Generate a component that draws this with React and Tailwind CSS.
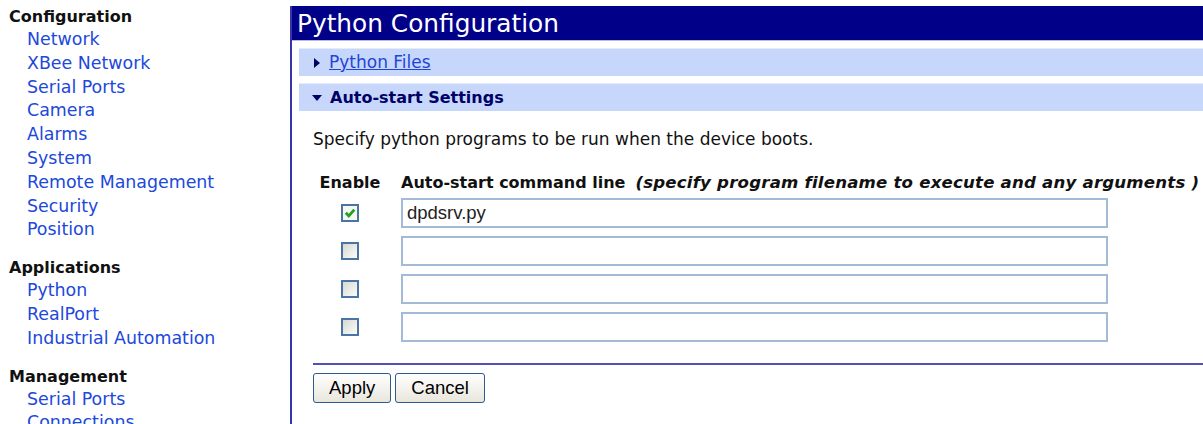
import React, { useState } from 'react'

const groups = [
  {
    title: 'Configuration',
    links: ['Network', 'XBee Network', 'Serial Ports', 'Camera', 'Alarms', 'System', 'Remote Management', 'Security', 'Position'],
  },
  { title: 'Applications', links: ['Python', 'RealPort', 'Industrial Automation'] },
  { title: 'Management', links: ['Serial Ports', 'Connections'] },
]

const initialRows = [
  { enabled: true, cmd: 'dpdsrv.py' },
  { enabled: false, cmd: '' },
  { enabled: false, cmd: '' },
  { enabled: false, cmd: '' },
]

function Sidebar() {
  return (
    <nav className="w-[290px] shrink-0 pt-[6px] pl-[9px] font-['DejaVu_Sans',sans-serif]">
      {groups.map((g, i) => (
        <div key={g.title} className={i > 0 ? 'mt-[15px]' : ''}>
          <div className="text-[16px] font-bold leading-[22px] text-[#111]">{g.title}</div>
          <ul>
            {g.links.map((l) => (
              <li key={l} className="pl-[18px] text-[17.4px] leading-[23.8px] text-[#2048dc]">
                <a href="#">{l}</a>
              </li>
            ))}
          </ul>
        </div>
      ))}
    </nav>
  )
}

function Checkbox({ checked, onChange }) {
  return (
    <button
      type="button"
      onClick={onChange}
      className={`flex h-[18px] w-[18px] items-center justify-center border-2 border-[#4a74a6] ${
        checked ? 'bg-[#f6f6f3]' : 'bg-gradient-to-br from-[#d9d9d3] to-[#fbfbf9]'
      }`}
    >
      {checked && (
        <svg viewBox="0 0 10 10" className="h-[12px] w-[12px]">
          <path d="M1.5 4.8 L4 7.4 L8.6 2.2" fill="none" stroke="#21a321" strokeWidth="2.4" />
        </svg>
      )}
    </button>
  )
}

function XpButton({ children }) {
  return (
    <button
      type="button"
      className="h-[30px] rounded-[3px] border border-[#2f5a8c] bg-gradient-to-b from-[#ffffff] to-[#e8e6dc] px-[15px] font-['Liberation_Sans',sans-serif] text-[18.5px] text-black"
    >
      {children}
    </button>
  )
}

function Arrow({ open }) {
  return open ? (
    <svg viewBox="0 0 10 6" className="mr-[6px] h-[6px] w-[10px]">
      <path d="M0 0 H10 L5 6 Z" fill="#000066" />
    </svg>
  ) : (
    <svg viewBox="0 0 6 10" className="mr-[9px] ml-[1px] h-[10px] w-[6px]">
      <path d="M0 0 L6 5 L0 10 Z" fill="#000066" />
    </svg>
  )
}

export default function App() {
  const [rows, setRows] = useState(initialRows)
  const [filesOpen, setFilesOpen] = useState(false)

  const toggle = (i) =>
    setRows(rows.map((r, j) => (j === i ? { ...r, enabled: !r.enabled } : r)))
  const setCmd = (i, v) => setRows(rows.map((r, j) => (j === i ? { ...r, cmd: v } : r)))

  return (
    <div className="flex h-[424px] w-[1203px] overflow-hidden bg-white">
      <Sidebar />

      {/* Main panel */}
      <main className="mt-[6px] flex-1 border-l-2 border-[#3535a8] font-['DejaVu_Sans',sans-serif]">
        <h1 className="h-[35px] border-b border-[#b9b9e2] bg-[#000088] pl-[5px] text-[24.8px] leading-[35px] font-normal text-white">
          Python Configuration
        </h1>

        <div className="pl-[7px]">
          <div
            onClick={() => setFilesOpen(!filesOpen)}
            className="mt-[7px] flex h-[28px] cursor-pointer items-center border-t border-[#e4ebfd] bg-[#c6d7fb] pl-[14px]"
          >
            <Arrow open={filesOpen} />
            <a href="#" className="text-[17px] text-[#1f45d6] underline">Python Files</a>
          </div>
          <div className="mt-[7px] flex h-[28px] items-center border-t border-[#e4ebfd] bg-[#c6d7fb] pl-[13px]">
            <Arrow open />
            <span className="ml-[2px] text-[16px] font-bold text-[#000066]">Auto-start Settings</span>
          </div>
        </div>

        <div className="pl-[21px]">
          <p className="mt-[16px] text-[17px] leading-[24px] text-[#111]">
            Specify python programs to be run when the device boots.
          </p>

          <div className="mt-[20px] grid grid-cols-[74px_707px] gap-x-[14px]">
            <div className="text-center text-[16px] font-bold leading-[24px] text-[#111]">Enable</div>
            <div className="whitespace-nowrap text-[16px] font-bold leading-[24px] text-[#111]">
              Auto-start command line
              <span className="ml-[10px] text-[16.6px] tracking-[0.2px] italic">(specify program filename to execute and any arguments )</span>
            </div>
          </div>

          <div className="mt-[3px] flex flex-col gap-[8px]">
            {rows.map((r, i) => (
              <div key={i} className="grid grid-cols-[74px_707px] gap-x-[14px]">
                <div className="flex items-center justify-center">
                  <Checkbox checked={r.enabled} onChange={() => toggle(i)} />
                </div>
                <input
                  value={r.cmd}
                  onChange={(e) => setCmd(i, e.target.value)}
                  className="h-[30px] border-2 border-[#a3bbd6] px-[4px] font-['Liberation_Sans',sans-serif] text-[18.5px] text-[#222] outline-none"
                />
              </div>
            ))}
          </div>

          <hr className="mt-[21px] h-[2px] border-0 bg-[#5252b4]" />

          <div className="mt-[8px] flex gap-[4px]">
            <XpButton>Apply</XpButton>
            <XpButton>Cancel</XpButton>
          </div>
        </div>
      </main>
    </div>
  )
}
